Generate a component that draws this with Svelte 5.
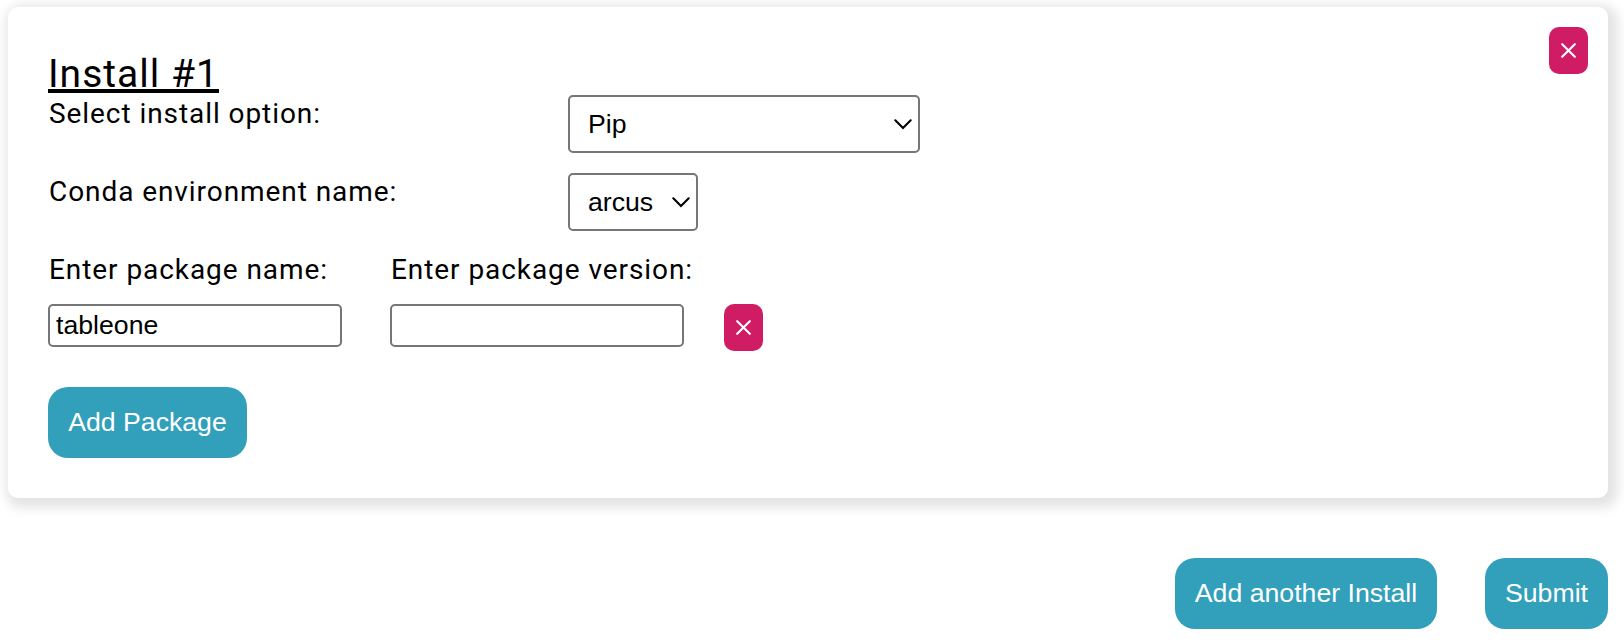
<script>
  let option = $state('Pip');
  let environment = $state('arcus');
  let packages = $state([{ name: 'tableone', version: '' }]);

  function addPackage() {
    packages.push({ name: '', version: '' });
  }
  function removePackage(index) {
    packages.splice(index, 1);
  }
</script>

{#snippet cross()}
  <svg width="15" height="15" viewBox="0 0 15 15" aria-hidden="true">
    <path d="M1.2 1.2 13.8 13.8M13.8 1.2 1.2 13.8" fill="none" stroke="#fff" stroke-width="2.1" stroke-linecap="round" />
  </svg>
{/snippet}

{#snippet chevron()}
  <svg class="chevron" width="18" height="11" viewBox="0 0 18 11" aria-hidden="true">
    <path d="M1.3 1.3 9 9 16.7 1.3" fill="none" stroke="#000" stroke-width="2.1" stroke-linecap="round" />
  </svg>
{/snippet}

<main>
  <section class="card">
    <div class="content">
      <h2><span>Install #1</span></h2>
      <div class="row">
        <span class="label option-label">Select install option:</span>
        <button class="select wide">{option}{@render chevron()}</button>
      </div>
      <div class="row">
        <span class="label env-label">Conda environment name:</span>
        <button class="select narrow">{environment}{@render chevron()}</button>
      </div>
      {#each packages as pkg, i}
        <div class="package">
          <label><span class="label name-label">Enter package name:</span><input bind:value={pkg.name} /></label>
          <label><span class="label version-label">Enter package version:</span><input bind:value={pkg.version} /></label>
          <button class="remove" aria-label="Remove package" onclick={() => removePackage(i)}>{@render cross()}</button>
        </div>
      {/each}
      <button class="action add" onclick={addPackage}>Add Package</button>
    </div>
    <button class="remove" aria-label="Remove install">{@render cross()}</button>
  </section>
  <footer>
    <button class="action another">Add another Install</button>
    <button class="action submit">Submit</button>
  </footer>
</main>

<style>
  :global(body) { margin: 0; background: #fff; }
  * { box-sizing: border-box; }
  main { width: 1624px; height: 644px; padding: 7px 16px 0 8px; overflow: hidden; color: #000; }
  button, input { font: 26.667px "Liberation Sans", Arial, sans-serif; margin: 0; }
  .card {
    display: flex;
    justify-content: space-between;
    align-items: flex-start;
    height: 491px;
    padding: 20px 20px 40px 40px;
    border-radius: 10px;
    background: #fff;
    box-shadow: 4px 4px 12px 6px rgba(0, 0, 0, .11);
  }
  h2 {
    height: 68px;
    margin: 0;
    padding-top: 18px;
    font: 400 39px/58px Roboto, sans-serif;
    letter-spacing: 1px;
    white-space: nowrap;
  }
  h2 span { display: inline-block; height: 48px; border-bottom: 4px solid #000; }
  .row { display: grid; grid-template-columns: 520px auto; justify-content: start; align-items: start; height: 78px; }
  .label { padding-left: 1px; font: 400 28px/38px Roboto, sans-serif; letter-spacing: .93px; white-space: nowrap; }
  .select {
    display: flex;
    align-items: center;
    justify-content: space-between;
    height: 58px;
    padding: 0 6px 0 18px;
    border: 2px solid #767676;
    border-radius: 5px;
    background: #fff;
    color: #000;
  }
  .wide { width: 352px; }
  .narrow { width: 130px; }
  .chevron { flex: none; }
  .package { display: flex; align-items: flex-start; }
  .package label { display: flex; flex-direction: column; gap: 15px; width: 342px; }
  .package .label { height: 38px; }
  .package input { width: 294px; height: 43px; padding: 0 6px; border: 2px solid #767676; border-radius: 5px; background: #fff; color: #000; outline: none; }
  .package .remove { margin: 53px 0 0 -8px; }
  .remove { display: grid; place-items: center; flex: none; width: 39px; height: 47px; padding: 0; border: 0; border-radius: 10px; background: #d01c65; }
  .action { height: 71px; padding: 0; border: 0; border-radius: 20px; background: #329fbb; color: #fff; white-space: nowrap; }
  .add { display: block; width: 199px; margin-top: 36px; }
  footer { display: flex; justify-content: flex-end; gap: 48px; margin-top: 60px; }
  .another { width: 262px; }
  .submit { width: 123px; }
</style>
